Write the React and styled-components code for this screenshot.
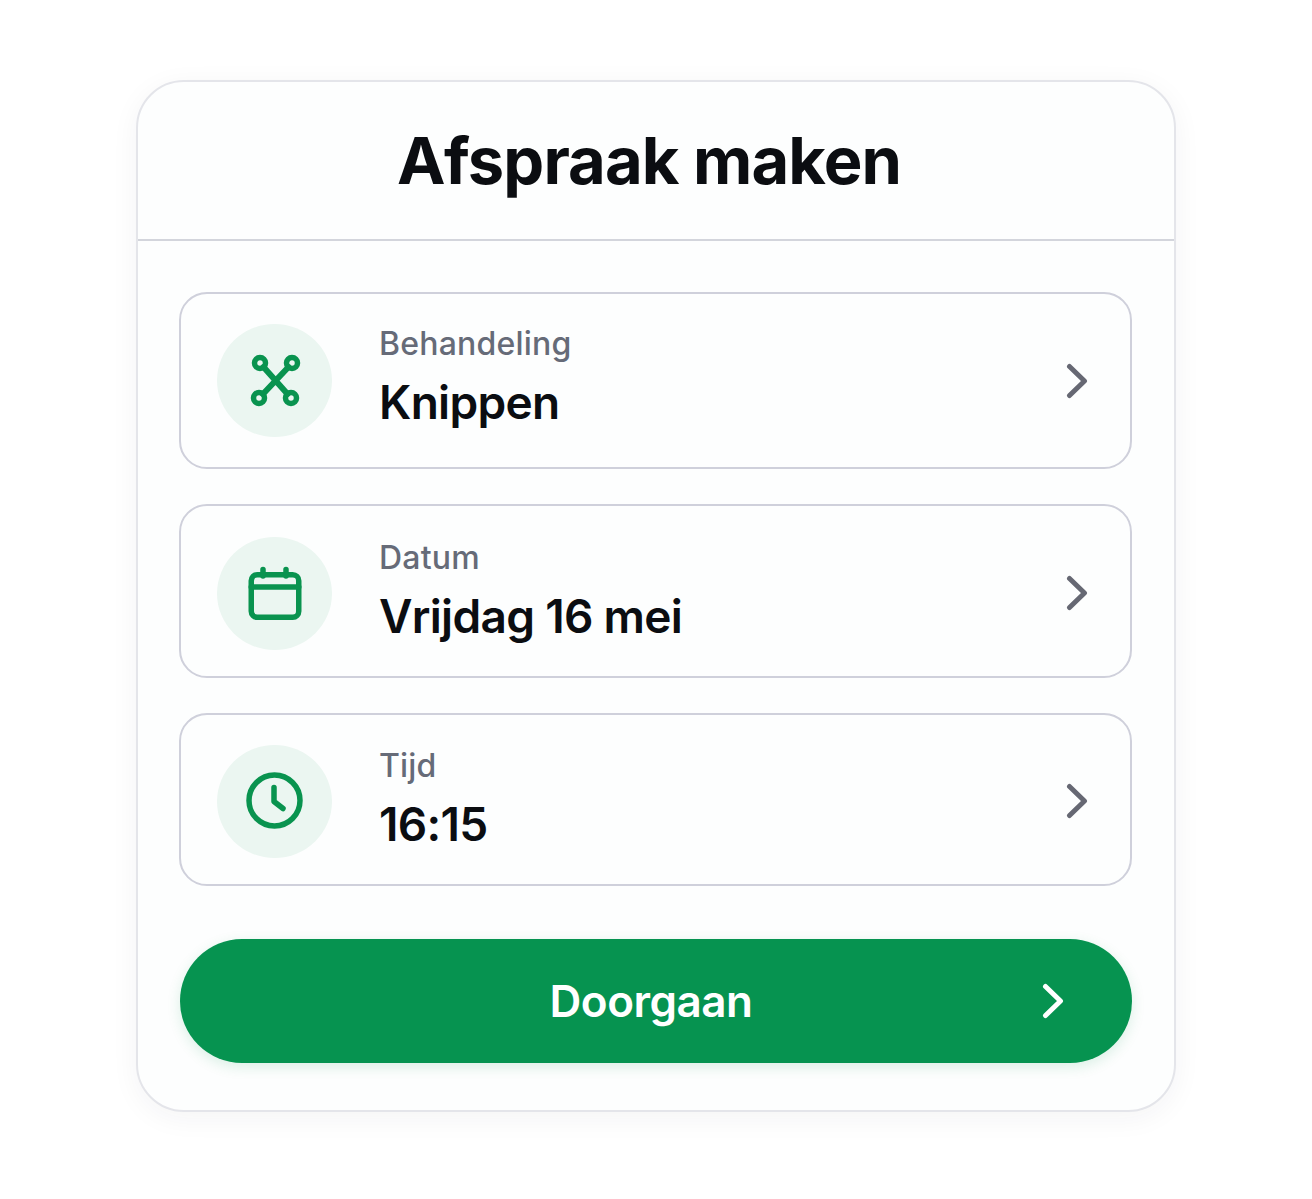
import React from 'react'
import styled, { createGlobalStyle } from 'styled-components'

const GlobalStyle = createGlobalStyle`
	html, body {
		margin: 0;
		padding: 0;
		background: #ffffff;
	}
	* {
		box-sizing: border-box;
	}
`

const Page = styled.div`
	min-height: 1199px;
	padding: 80px 136px 87px;
	font-family: Inter, "Liberation Sans", sans-serif;
`

const Card = styled.div`
	width: 1040px;
	height: 1032px;
	background: #fdfefe;
	border: 2px solid #e4e5ea;
	border-radius: 48px;
	box-shadow: 0 6px 28px rgba(30, 35, 60, 0.05);
	display: flex;
	flex-direction: column;
`

const Header = styled.header`
	height: 159px;
	flex-shrink: 0;
	border-bottom: 2px solid #d3d5dc;
	display: flex;
	align-items: center;
	justify-content: center;
	padding-right: 14px;
`

const Title = styled.h1`
	margin: 0;
	font-size: 65px;
	font-weight: 700;
	letter-spacing: -0.9px;
	color: #0b0d11;
`

const Body = styled.div`
	padding: 51px 42px 0 41px;
	display: flex;
	flex-direction: column;
`

const RowList = styled.div`
	display: flex;
	flex-direction: column;
	gap: 35px;
`

const Row = styled.div`
	height: ${props => props.h}px;
	background: #fdfefe;
	border: 2px solid #cfd0db;
	border-radius: 28px;
	padding: ${props => props.topPad}px 42px 0 36px;
	display: flex;
	align-items: center;
`

const IconCircle = styled.div`
	width: 115px;
	height: 113px;
	border-radius: 50%;
	background: #ebf6f1;
	flex-shrink: 0;
	display: flex;
	align-items: center;
	justify-content: center;
	color: #09934f;
`

const RowText = styled.div`
	flex: 1;
	margin-left: 47px;
	padding-bottom: ${props => props.lift}px;
	display: flex;
	flex-direction: column;
`

const Label = styled.div`
	font-size: 32px;
	line-height: 40px;
	font-weight: 500;
	letter-spacing: 0.2px;
	color: #666b78;
`

const Value = styled.div`
	font-size: 46px;
	line-height: 56px;
	margin-top: 10px;
	font-weight: 600;
	letter-spacing: -0.7px;
	color: #0b0d11;
`

const Chevron = styled.svg`
	width: 22px;
	height: 36px;
	flex-shrink: 0;
	fill: none;
	stroke: ${props => props.color};
	stroke-width: 5;
	stroke-linecap: round;
	stroke-linejoin: round;
`

const ContinueButton = styled.button`
	margin: 53px 0 0 1px;
	height: 124px;
	width: 952px;
	border: none;
	border-radius: 62px;
	background: #069350;
	box-shadow: 0 4px 14px rgba(7, 148, 80, 0.14);
	padding: 0 68px 0 0;
	display: flex;
	align-items: center;
	font-family: inherit;
`

const ButtonLabel = styled.span`
	flex: 1;
	padding-left: 80px;
	text-align: center;
	font-size: 44px;
	font-weight: 600;
	letter-spacing: -0.5px;
	color: #ffffff;
`

const ScissorsIcon = () => (
	<svg width="54" height="54" viewBox="0 0 54 54" fill="none" stroke="currentColor" strokeWidth="5.5" strokeLinecap="round">
		<circle cx="12" cy="9" r="5.5" />
		<circle cx="44" cy="9" r="5.5" />
		<circle cx="11" cy="44" r="5.5" />
		<circle cx="43" cy="44" r="5.5" />
		<path d="M15.5 13 L39.5 40 M40.5 13 L15 40" strokeWidth="6" />
	</svg>
)

const CalendarIcon = () => (
	<svg width="56" height="56" viewBox="0 0 56 56" fill="none" stroke="currentColor" strokeWidth="5.5" strokeLinecap="round" strokeLinejoin="round">
		<rect x="4.25" y="9.75" width="47.5" height="42.5" rx="6" />
		<path d="M4.25 22 H51.75 M16 4.5 V11 M39 4.5 V11" />
	</svg>
)

const ClockIcon = () => (
	<svg width="58" height="58" viewBox="0 0 58 58" fill="none" stroke="currentColor" strokeWidth="5.5" strokeLinecap="round" strokeLinejoin="round">
		<circle cx="28.5" cy="28.5" r="25.5" />
		<path d="M28 15.5 V29.5 L37 36.5" />
	</svg>
)

const rows = [
	{ label: 'Behandeling', value: 'Knippen', icon: <ScissorsIcon />, h: 177, topPad: 0, lift: 8 },
	{ label: 'Datum', value: 'Vrijdag 16 mei', icon: <CalendarIcon />, h: 174, topPad: 4, lift: 4 },
	{ label: 'Tijd', value: '16:15', icon: <ClockIcon />, h: 173, topPad: 3, lift: 5 },
]

const App = () => (
	<Page>
		<GlobalStyle />
		<Card>
			<Header>
				<Title>Afspraak maken</Title>
			</Header>
			<Body>
				<RowList>
					{rows.map(row => (
						<Row key={row.label} h={row.h} topPad={row.topPad}>
							<IconCircle>{row.icon}</IconCircle>
							<RowText lift={row.lift}>
								<Label>{row.label}</Label>
								<Value>{row.value}</Value>
							</RowText>
							<Chevron viewBox="0 0 22 36" color="#666873">
								<path d="M3.5 3.5 L18.5 18 L3.5 32.5" />
							</Chevron>
						</Row>
					))}
				</RowList>
				<ContinueButton>
					<ButtonLabel>Doorgaan</ButtonLabel>
					<Chevron viewBox="0 0 22 36" color="#ffffff">
						<path d="M3.5 3.5 L18.5 18 L3.5 32.5" />
					</Chevron>
				</ContinueButton>
			</Body>
		</Card>
	</Page>
)

export default App
